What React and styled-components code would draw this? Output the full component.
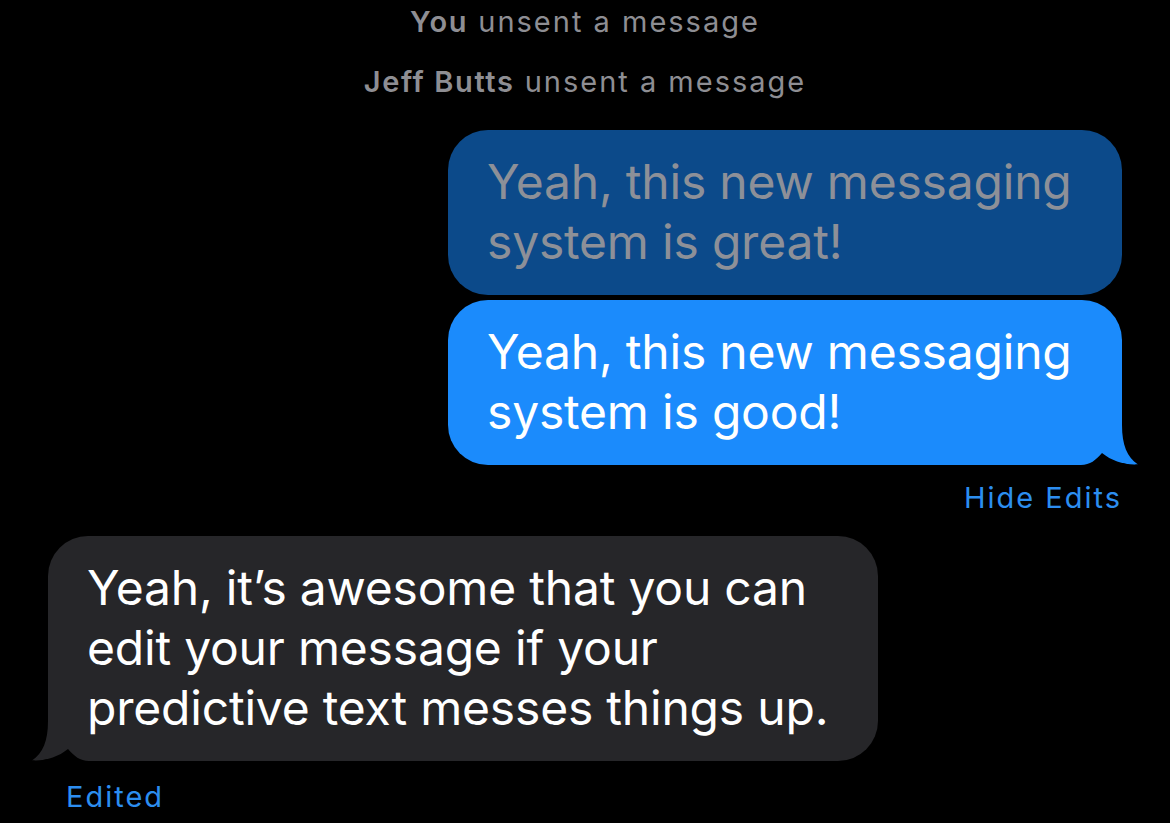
import React from 'react'
import styled, { createGlobalStyle } from 'styled-components'

const GlobalStyle = createGlobalStyle`
  html, body {
    margin: 0;
    padding: 0;
    background: #000;
  }
  body {
    font-family: Inter, "Noto Sans", sans-serif;
    -webkit-font-smoothing: antialiased;
  }
`

const Thread = styled.div`
  width: 1170px;
  height: 823px;
  overflow: hidden;
  background: #000;
  display: flex;
  flex-direction: column;
  padding-top: 4px;
  box-sizing: border-box;
`

const Notice = styled.div`
  text-align: center;
  color: #8e8e93;
  font-size: 29px;
  line-height: 36px;
  height: 60px;
  letter-spacing: 2px;

  b {
    font-weight: 600;
    letter-spacing: 1.6px;
  }
`

const Group = styled.div`
  display: flex;
  flex-direction: column;
  align-items: ${p => (p.$mine ? 'flex-end' : 'flex-start')};
  padding: ${p => (p.$mine ? '6px 48px 0 0' : '21px 0 0 48px')};
  gap: 5px;
`

const Bubble = styled.div`
  position: relative;
  box-sizing: border-box;
  width: ${p => p.$width}px;
  padding: 22px 28px 23px 39px;
  border-radius: 40px;
  ${p => p.$tail === 'right' && 'border-bottom-right-radius: 0;'}
  ${p => p.$tail === 'left' && 'border-bottom-left-radius: 0;'}
  background: ${p => p.$bg};
  color: ${p => p.$fg};
  font-size: 48px;
  line-height: 60px;
  letter-spacing: -0.2px;
`

const Tail = styled.svg`
  position: absolute;
  bottom: 0;
  width: 56px;
  height: 40px;
  overflow: visible;
  ${p => (p.$side === 'right' ? 'right: -16px;' : 'left: -16px; transform: scaleX(-1);')}
`

const Meta = styled.div`
  color: #2c8ef0;
  font-size: 29px;
  line-height: 34px;
  letter-spacing: 2px;
  margin: ${p => p.$margin};
`

const BubbleTail = ({ side, color }) => (
  <Tail $side={side} viewBox="0 0 56 40">
    <path d="M40 0 C40 20 45 32 56 39.5 C43 40.5 30 36 20 28 L20 0 Z" fill={color} />
    <path d="M-1 40.5 L-1 40 C8 40 14 35 20 28 C30 36 43 40.5 56 39.5 L56 40.5 Z" fill="#000" />
  </Tail>
)

const App = () => {
  return (
    <>
      <GlobalStyle />
      <Thread>
        <Notice><b>You</b> unsent a message</Notice>
        <Notice><b>Jeff Butts</b> unsent a message</Notice>

        <Group $mine>
          <Bubble $width={674} $bg="#0c4a8a" $fg="#8d9098">
            Yeah, this new messaging system is great!
          </Bubble>
          <Bubble $width={674} $bg="#1b8bfc" $fg="#fff" $tail="right">
            Yeah, this new messaging system is good!
            <BubbleTail side="right" color="#1b8bfc" />
          </Bubble>
          <Meta $margin="11px 0 0 0">Hide Edits</Meta>
        </Group>

        <Group>
          <Bubble $width={830} $bg="#262629" $fg="#fff" $tail="left">
            Yeah, it’s awesome that you can edit your message if your predictive text messes things up.
            <BubbleTail side="left" color="#262629" />
          </Bubble>
          <Meta $margin="14px 0 0 18px">Edited</Meta>
        </Group>
      </Thread>
    </>
  )
}

export default App
